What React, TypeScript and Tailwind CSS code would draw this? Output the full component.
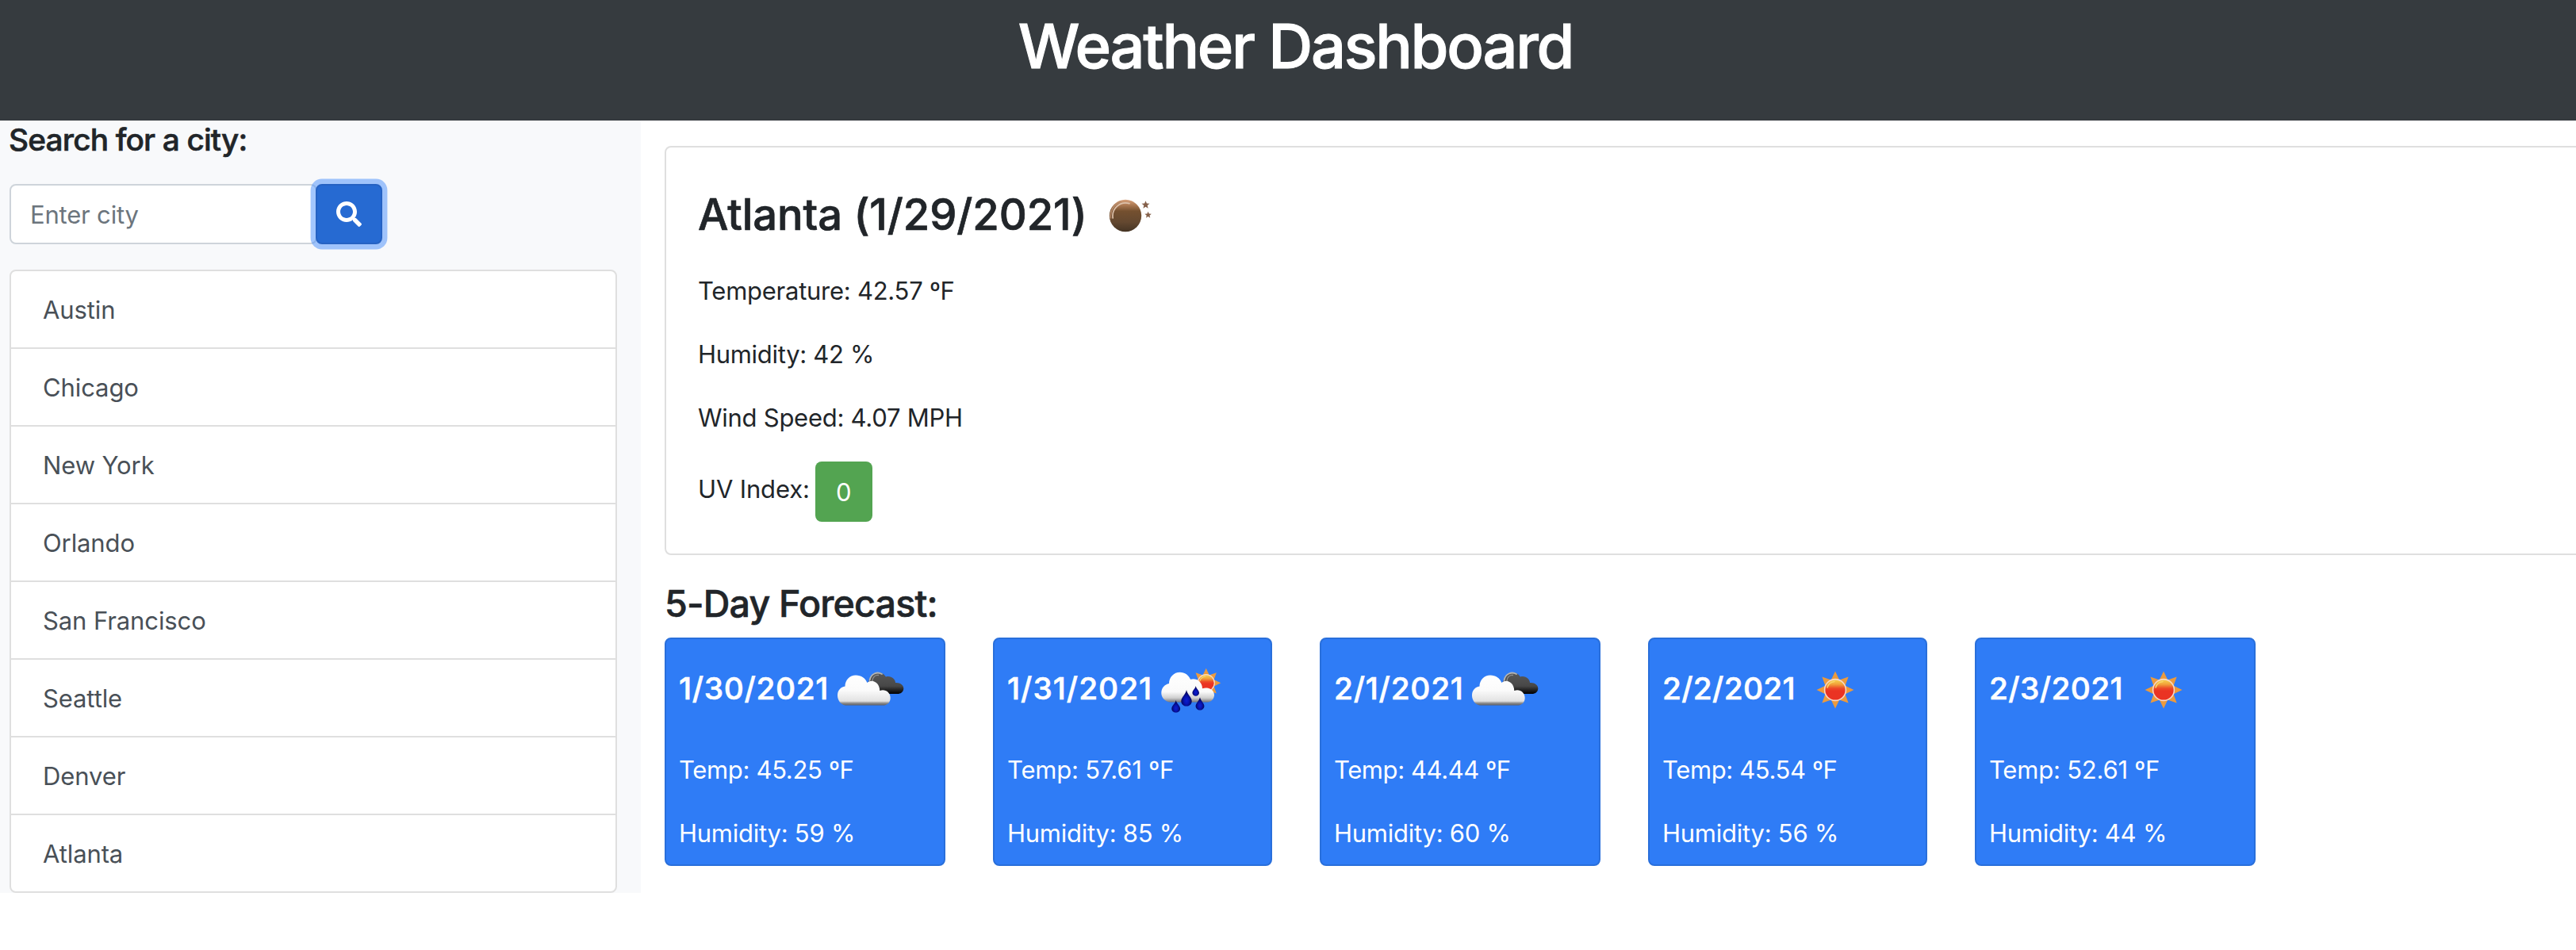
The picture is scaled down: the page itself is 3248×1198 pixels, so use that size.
import { FaSearch } from 'react-icons/fa';

const RAYS = Array.from({ length: 8 }, (_, i) => i * 45);

function Sun({ cx, cy, scale = 1 }: { cx: number; cy: number; scale?: number }) {
  return (
    <g transform={`translate(${cx} ${cy}) scale(${scale})`}>
      {RAYS.map((a) => (
        <path key={a} d="M-5 -13 L0 -23.5 L5 -13Z" fill="#eb9a3e" transform={`rotate(${a})`} />
      ))}
      <circle r="14.2" fill="#f7d9c9" />
      <circle r="12.6" fill="url(#sunDisk)" />
      <path d="M-10 -3 A10.5 10.5 0 0 1 -1 -10.5" fill="none" stroke="#f9d66a" strokeWidth="1.4" strokeLinecap="round" />
    </g>
  );
}

// Gradients shared by the weather icons.
function Defs() {
  return (
    <svg className="absolute h-0 w-0" aria-hidden="true">
      <defs>
        <linearGradient id="sunDisk" x1="0" y1="0" x2="0" y2="1">
          <stop offset="0" stopColor="#f6d04f" />
          <stop offset="0.22" stopColor="#f2a23a" />
          <stop offset="0.42" stopColor="#ec4a28" />
          <stop offset="0.55" stopColor="#ea3323" />
          <stop offset="1" stopColor="#ea3323" />
        </linearGradient>
        <linearGradient id="whiteCloud" gradientUnits="userSpaceOnUse" x1="0" y1="31" x2="0" y2="69.5">
          <stop offset="0" stopColor="#ffffff" />
          <stop offset="0.5" stopColor="#fbfbfb" />
          <stop offset="0.86" stopColor="#e2e2e2" />
          <stop offset="0.93" stopColor="#8a8a8a" />
          <stop offset="1" stopColor="#5c5f68" />
        </linearGradient>
        <linearGradient id="darkCloud" gradientUnits="userSpaceOnUse" x1="0" y1="27" x2="0" y2="55">
          <stop offset="0" stopColor="#5a5a5a" />
          <stop offset="0.65" stopColor="#474747" />
          <stop offset="0.85" stopColor="#1c1c1c" />
          <stop offset="1" stopColor="#000000" />
        </linearGradient>
        <linearGradient id="rainCloud" gradientUnits="userSpaceOnUse" x1="0" y1="27" x2="0" y2="66">
          <stop offset="0" stopColor="#ffffff" />
          <stop offset="0.65" stopColor="#fafafa" />
          <stop offset="0.85" stopColor="#cfcfcf" />
          <stop offset="1" stopColor="#6d6d70" />
        </linearGradient>
        <radialGradient id="drop" cx="0.5" cy="0.65" r="0.5">
          <stop offset="0" stopColor="#0b1fd0" />
          <stop offset="0.45" stopColor="#0713b4" />
          <stop offset="1" stopColor="#03065c" />
        </radialGradient>
        <linearGradient id="moon" x1="0" y1="0" x2="0" y2="1">
          <stop offset="0" stopColor="#d9a27c" />
          <stop offset="0.18" stopColor="#a87650" />
          <stop offset="0.36" stopColor="#74502f" />
          <stop offset="0.7" stopColor="#644830" />
          <stop offset="1" stopColor="#453424" />
        </linearGradient>
      </defs>
    </svg>
  );
}

function SunIcon() {
  return (
    <svg viewBox="0 0 100 100" className="mt-1 size-[100px] shrink-0">
      <Sun cx={50} cy={50} />
    </svg>
  );
}

function CloudsIcon() {
  return (
    <svg viewBox="0 0 100 100" className="mt-1 size-[100px] shrink-0">
      <path
        d="M50 55 C46 50 47 40 49.5 36 C53 27.5 64 24.5 70 33.5 C76 31.5 82 36 82 41 C88 40.5 92.5 44 92.3 48.5 C92 53 88 55 85 55Z"
        fill="url(#darkCloud)"
      />
      <path d="M49.5 38 C51 29.5 59 26.5 65 30" fill="none" stroke="#b5b5b5" strokeWidth="1.8" strokeLinecap="round" />
      <path d="M53 39.5 C53 33 57.5 31 60.5 31.5" fill="none" stroke="#8f8f8f" strokeWidth="1.3" strokeLinecap="round" />
      <path
        d="M19 69.5 C13 68.5 9 63 9 57 C9 50.5 13 46.5 18.5 45.5 C18.5 37.5 24.5 31.5 32 31.5 C39 31.5 44.5 35.5 46.3 41 C53 35.5 62 41 62.3 51 C69 48.5 75.7 53 75.7 60 C75.7 65.5 72 69 67.5 69.5Z"
        fill="url(#whiteCloud)"
      />
    </svg>
  );
}

const DROPS = [
  { x: 42, y: 50, w: 6.7, h: 20.5 },
  { x: 28.7, y: 63, w: 5.4, h: 15.5 },
  { x: 53.7, y: 45, w: 4.3, h: 12.7 },
  { x: 59, y: 59.3, w: 5.4, h: 16.2 },
];

function RainIcon() {
  return (
    <svg viewBox="0 0 100 100" className="mt-1 size-[100px] shrink-0">
      <Sun cx={66.7} cy={41.3} scale={0.79} />
      <path
        d="M21 65.5 C14.5 64.5 10.3 59.5 10.3 54 C10.3 47.5 14.5 43 20 42 C20 34 26 27.7 33.7 27.7 C40 27.7 45 31.5 47 36.8 C54 34.5 62 39.5 62 48.2 C70 46 77 50 77 56.5 C77 61.5 73 65.2 68.5 65.5Z"
        fill="url(#rainCloud)"
      />
      {DROPS.map((d) => (
        <path
          key={d.x}
          transform={`translate(${d.x} ${d.y}) scale(${d.w} ${d.h})`}
          d="M0 0 C0.15 0.28 1 0.45 1 0.69 C1 0.87 0.55 1 0 1 C-0.55 1 -1 0.87 -1 0.69 C-1 0.45 -0.15 0.28 0 0Z"
          fill="url(#drop)"
        />
      ))}
    </svg>
  );
}

const STAR = 'M0 -5 L1.4 -1.7 L5 -1.5 L2.2 0.8 L3.1 4.4 L0 2.4 L-3.1 4.4 L-2.2 0.8 L-5 -1.5 L-1.4 -1.7Z';

function NightIcon() {
  return (
    <svg viewBox="0 0 100 100" className="mt-1 -ml-0.5 size-[100px] shrink-0">
      <circle cx="50" cy="50" r="20.2" fill="url(#moon)" />
      <path d="M34.2 53 A16.4 16.4 0 0 1 55 34.6" fill="none" stroke="#dcc0aa" strokeWidth="1.7" strokeLinecap="round" />
      <path d="M31.5 53 A18.8 18.8 0 0 1 44 32.5" fill="none" stroke="#b88c6c" strokeWidth="1.5" strokeLinecap="round" />
      <path d={STAR} fill="#84604a" transform="translate(75.5 36.3)" />
      <path d={STAR} fill="#84604a" transform="translate(78.6 49) scale(0.85)" />
    </svg>
  );
}

const CITIES = ['Austin', 'Chicago', 'New York', 'Orlando', 'San Francisco', 'Seattle', 'Denver', 'Atlanta'];

const FORECAST = [
  { date: '1/30/2021', dateClass: 'w-[191px] tracking-[0.67px]', Icon: CloudsIcon, temp: '45.25', tempClass: 'tracking-[-0.33px]', humidity: 59 },
  { date: '1/31/2021', dateClass: 'w-[184px] tracking-[1px]', Icon: RainIcon, temp: '57.61', tempClass: 'tracking-[-0.2px]', humidity: 85 },
  { date: '2/1/2021', dateClass: 'w-[165px] tracking-[0.75px]', Icon: CloudsIcon, temp: '44.44', tempClass: 'tracking-[-0.41px]', humidity: 60 },
  { date: '2/2/2021', dateClass: 'w-[168px] tracking-[0.3px]', Icon: SunIcon, temp: '45.54', tempClass: 'tracking-[-0.38px]', humidity: 56 },
  { date: '2/3/2021', dateClass: 'w-[170px] tracking-[0.4px]', Icon: SunIcon, temp: '52.61', tempClass: 'tracking-[-0.22px]', humidity: 44 },
];

function Sidebar() {
  return (
    <aside className="w-[808px] shrink-0 bg-[#f8f9fb] pr-[30px] pl-3">
      <h4 className="-ml-px text-[38.8px] leading-[48px] font-medium tracking-[-0.85px] [-webkit-text-stroke:0.6px]">
        Search for a city:
      </h4>
      <div className="mt-8 flex">
        <input
          placeholder="Enter city"
          className="h-[76px] w-[388px] rounded-lg border-2 border-[#ced4da] bg-white px-6 text-[31px] leading-[48px] tracking-[-0.19px] placeholder:text-[#6c757d] placeholder:opacity-100"
        />
        <button className="relative -ml-0.5 flex h-[76px] w-[84px] items-center justify-center rounded-lg border-2 border-[#2562c3] bg-[#266ad2] text-white shadow-[0_0_0_6.4px_rgba(70,141,252,0.5)]">
          <FaSearch className="size-8" />
        </button>
      </div>
      <ul className="mt-8 divide-y-2 divide-[#dfdfdf] rounded-lg border-2 border-[#dfdfdf] bg-white">
        {CITIES.map((city) => (
          <li key={city} className="px-10 pt-[25px] pb-[23px] text-[31px] leading-[48px] tracking-[-0.1px] text-[#495057]">
            {city}
          </li>
        ))}
      </ul>
    </aside>
  );
}

function CurrentWeather() {
  return (
    <section className="-mr-3 rounded-lg border-2 border-[#dfdfdf] bg-white p-10 text-[31px] leading-[48px]">
      <div className="flex h-[88px] items-center">
        <h2 className="text-[54.3px] leading-[67px] font-medium tracking-[-0.08px] [-webkit-text-stroke:0.7px]">
          Atlanta (1/29/2021)
        </h2>
        <NightIcon />
      </div>
      <p className="mt-[29px] tracking-[-0.26px]">Temperature: 42.57 ºF</p>
      <p className="mt-8 tracking-[-0.3px]">Humidity: 42 %</p>
      <p className="mt-8 tracking-[-0.26px]">Wind Speed: 4.07 MPH</p>
      <div className="mt-[31px] flex gap-[7px]">
        <p className="mt-[11px] tracking-[-0.14px]">UV Index:</p>
        <span className="h-[76px] w-[72px] rounded-lg bg-[#53a451] pt-[15px] text-center text-white">0</span>
      </div>
    </section>
  );
}

function ForecastCard({ day }: { day: (typeof FORECAST)[number] }) {
  const { Icon } = day;
  return (
    <article className="h-[288px] rounded-lg border-2 border-[#296fdb] bg-[#2f7cf6] px-4 pt-3 text-[31px] leading-[48px] text-white">
      <div className="flex h-[100px] items-center">
        <h5
          className={`shrink-0 text-[38.8px] leading-[48px] font-medium whitespace-nowrap [-webkit-text-stroke:0.6px] ${day.dateClass}`}
        >
          {day.date}
        </h5>
        <Icon />
      </div>
      <p className={`mt-[29px] ${day.tempClass}`}>Temp: {day.temp} ºF</p>
      <p className="mt-8 tracking-[-0.25px]">Humidity: {day.humidity} %</p>
    </article>
  );
}

export default function App() {
  return (
    <div className="h-[1198px] w-full overflow-hidden bg-white font-['Inter',sans-serif] text-[#212529]">
      <Defs />
      <header className="flex h-[152px] justify-center bg-[#363b3f] pt-2.5 pl-[19px]">
        <h1 className="text-[77.6px] leading-[96px] font-medium tracking-[-2.3px] text-white [-webkit-text-stroke:1px]">
          Weather Dashboard
        </h1>
      </header>
      <div className="flex items-start">
        <Sidebar />
        <main className="min-w-0 flex-1 pt-8 pl-[30px]">
          <CurrentWeather />
          <h3 className="mt-8 mb-3.5 text-[46.6px] leading-[58px] font-medium tracking-[-0.83px] [-webkit-text-stroke:0.6px]">
            5-Day Forecast:
          </h3>
          <div className="grid grid-cols-[354px_352px_354px_352px_354px] gap-[60px]">
            {FORECAST.map((day) => (
              <ForecastCard key={day.date} day={day} />
            ))}
          </div>
        </main>
      </div>
    </div>
  );
}
